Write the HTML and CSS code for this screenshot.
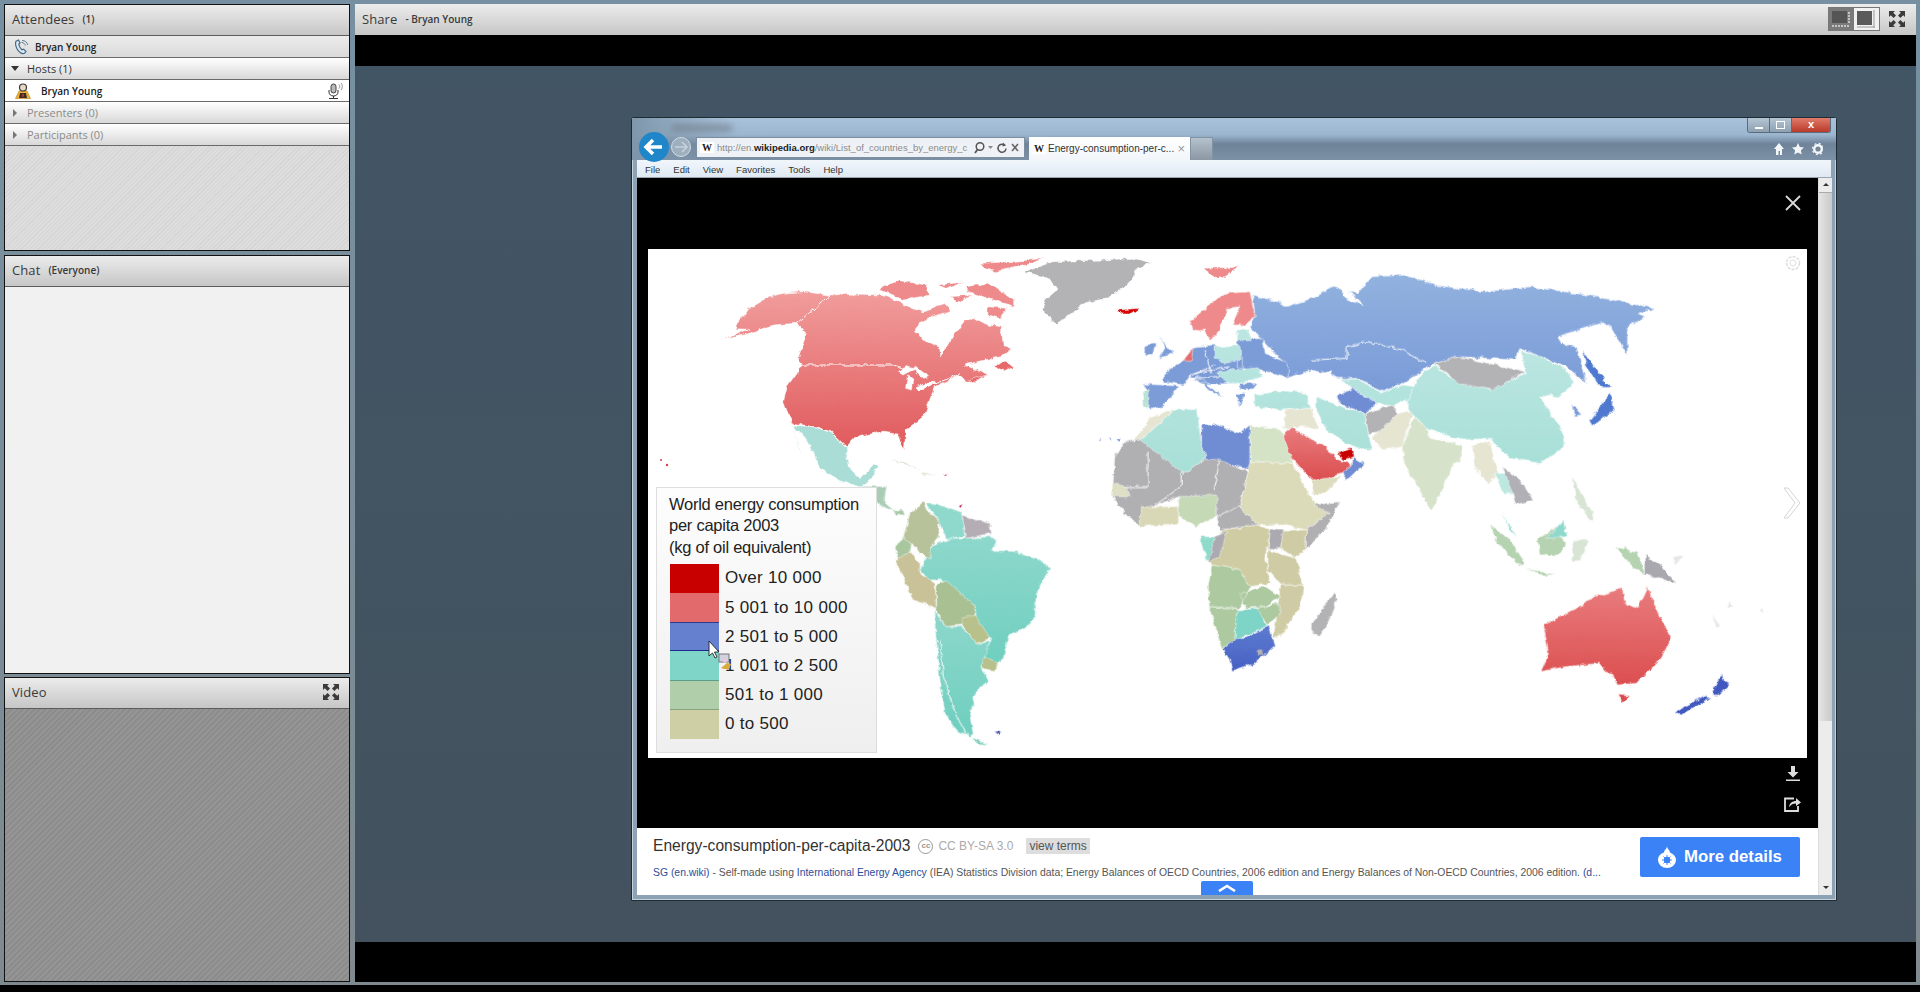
FILE: index.html
```html
<!DOCTYPE html>
<html lang="en">
<head>
<meta charset="utf-8">
<title>Share - Bryan Young</title>
<link rel="stylesheet" href="styles.css">
</head>
<body>
<div class="app">
  <div class="left">
    <section class="panel attendees">
      <header class="phead"><span class="ptitle">Attendees</span><span class="psub">(1)</span></header>
      <div class="row me">
        <svg class="ico-phone" viewBox="0 0 16 16" width="16" height="16"><path d="M3 2.200 5.400 1l1.700 3-1.300 1.200c.3 2 1.300 4 3 5.600l1.800-.6 2.400 2.400-1.600 1.700c-1.300.7-3.400.3-5.300-1.600C3.500 10.100 1.700 5.300 3 2.200z" fill="#dfe8ee" stroke="#3f6a8a" stroke-width="1.200"/><path d="M8.500 3.500c2 0 3.500 1.200 3.800 3M9 1.500c3 0 5.300 1.800 5.800 4.500" fill="none" stroke="#5d7f98" stroke-width="1"/></svg>
        <span class="name">Bryan Young</span>
      </div>
      <div class="row group"><i class="tri down"></i><span>Hosts (1)</span></div>
      <div class="row user">
        <svg class="ico-host" viewBox="0 0 18 18" width="18" height="18"><path d="M1.500 16.500 5 9h8l3.500 7.500z" fill="#eab23c" stroke="#b98212" stroke-width=".6"/><circle cx="9" cy="5.500" r="3.500" fill="#e8d7c4" stroke="#3a3a3a" stroke-width="1.200"/><path d="M6 11h6l1 5H5z" fill="#3b2f25"/><path d="M9 11l1 2-1 3-1-3z" fill="#c73b2a"/></svg>
        <span class="name">Bryan Young</span>
        <svg class="ico-mic" viewBox="0 0 18 18" width="18" height="18"><rect x="5" y="2" width="5" height="9" rx="2.500" fill="#b9b9b9" stroke="#333" stroke-width=".9"/><path d="M3 8v2c0 2.500 2 4 4.500 4S12 12.500 12 10V8M7.500 14v2M3 16.500h9" fill="none" stroke="#333" stroke-width="1"/><path d="M13 2.500c1 1 1 3 0 4M15 1c1.800 2 1.800 5 0 7" fill="none" stroke="#777" stroke-width=".8"/></svg>
      </div>
      <div class="row group off"><i class="tri"></i><span>Presenters (0)</span></div>
      <div class="row group off"><i class="tri"></i><span>Participants (0)</span></div>
      <div class="hatch"></div>
    </section>
    <section class="panel chat">
      <header class="phead"><span class="ptitle">Chat</span><span class="psub">(Everyone)</span></header>
      <div class="chatbody"></div>
    </section>
    <section class="panel video">
      <header class="phead"><span class="ptitle">Video</span>
        <svg class="expand" viewBox="0 0 16 16" width="16" height="16"><path d="M0 0h6L4.200 1.800 7 4.600 4.600 7 1.800 4.200 0 6zM16 0v6l-1.800-1.800L11.400 7 9 4.600l2.800-2.800L10 0zM0 16v-6l1.800 1.800L4.600 9 7 11.400l-2.800 2.800L6 16zM16 16h-6l1.800-1.800L9 11.400 11.400 9l2.800 2.800L16 10z" fill="#3a3a3a"/></svg>
      </header>
      <div class="vidbody"></div>
    </section>
  </div>

  <section class="share">
    <header class="phead sharehead">
      <span class="ptitle">Share</span><span class="psub">- Bryan Young</span>
      <div class="layouts">
        <span class="lbtn dark"><svg viewBox="0 0 24 22" width="24" height="22"><rect x="3" y="3" width="15" height="12" fill="#555"/><path d="M20 4v11M3 18h18" stroke="#ddd" stroke-width="1.500" stroke-dasharray="2 1"/></svg></span>
        <span class="lbtn light"><svg viewBox="0 0 24 22" width="24" height="22"><rect x="3" y="3" width="15" height="14" fill="#5a5a5a"/><path d="M20 2v18M3 19h18" stroke="#999" stroke-width="1"/></svg></span>
      </div>
      <svg class="expand top" viewBox="0 0 16 16" width="16" height="16"><path d="M0 0h6L4.200 1.800 7 4.600 4.600 7 1.800 4.200 0 6zM16 0v6l-1.800-1.800L11.400 7 9 4.600l2.800-2.800L10 0zM0 16v-6l1.800 1.800L4.600 9 7 11.400l-2.800 2.800L6 16zM16 16h-6l1.800-1.800L9 11.400 11.400 9l2.800 2.800L16 10z" fill="#3a3a3a"/></svg>
    </header>
    <div class="band"></div>
    <div class="stage">
      <div class="win">
        <div class="chrome">
          <i class="smudge"></i>
          <div class="wctl"><span class="wb"><i class="wmin"></i></span><span class="wb"><i class="wmax"></i></span><span class="wb close">x</span></div>
          <span class="back"><svg viewBox="0 0 30 30" width="30" height="30"><circle cx="15" cy="15" r="15" fill="#1f86c9"/><path d="M7 15h16M14 8l-7 7 7 7" fill="none" stroke="#fff" stroke-width="3.500"/></svg></span>
          <span class="fwd"><svg viewBox="0 0 20 20" width="20" height="20"><circle cx="10" cy="10" r="9.500" fill="#9eb0bf" stroke="#d3dde5"/><path d="M4 10h12M11 5l5 5-5 5" fill="none" stroke="#c7d2da" stroke-width="1.500"/></svg></span>
          <div class="addr">
            <span class="wfav">W</span>
            <span class="url">http://en.<b>wikipedia.org</b>/wiki/List_of_countries_by_energy_c</span>
            <svg viewBox="0 0 46 14" width="46" height="14"><circle cx="6" cy="5.500" r="3.800" fill="none" stroke="#555" stroke-width="1.500"/><path d="M3.500 8.500 1 12" stroke="#555" stroke-width="1.800"/><path d="M14 5h5l-2.500 3z" fill="#888"/><path d="M31 4.500a4 4 0 1 0 1 3" fill="none" stroke="#555" stroke-width="1.500"/><path d="M29 1.500l3 3-3.500 1z" fill="#555"/><path d="M38 3l6 7M44 3l-6 7" stroke="#666" stroke-width="1.600"/></svg>
          </div>
          <div class="tab"><span class="wfav">W</span><span class="tabtext">Energy-consumption-per-c...</span><span class="tabx">×</span></div>
          <div class="stub"></div>
          <div class="tools">
            <svg viewBox="0 0 50 14" width="50" height="14"><path d="M6 1 1 7h2v6h2.500V9h1.500v4h2V7h2z" fill="#f4f7fa"/><path d="M25 1l1.800 3.900 4.200.5-3.100 2.900.8 4.200-3.700-2.100-3.700 2.100.8-4.200-3.100-2.900 4.200-.5z" fill="#f4f7fa"/><circle cx="45" cy="7" r="3.800" fill="none" stroke="#f4f7fa" stroke-width="2.400"/><circle cx="45" cy="7" r="5.600" fill="none" stroke="#f4f7fa" stroke-width="1.200" stroke-dasharray="2 2.400"/></svg>
          </div>
        </div>
        <nav class="menu"><span>File</span><span>Edit</span><span>View</span><span>Favorites</span><span>Tools</span><span>Help</span></nav>
        <div class="page">
          <div class="main">
            <div class="viewer">
              <svg class="icn-x" viewBox="0 0 16 16" width="16" height="16"><path d="M1 1l14 14M15 1 1 15" stroke="#d8d8d8" stroke-width="1.800"/></svg>
              <svg class="icn-dl" viewBox="0 0 14 16" width="14" height="16"><path d="M5 1h4v6h3.500L7 12.500 1.500 7H5zM0 14.500h14V16H0z" fill="#ddd"/></svg>
              <svg class="icn-sh" viewBox="0 0 18 16" width="18" height="16"><path d="M10 2.500H1v12.500h13v-5" fill="none" stroke="#ddd" stroke-width="1.800"/><path d="M5 11c.5-4 3.500-6 7-6V2l5 4.500L12 10V7.500c-3 0-5 1-7 3.500z" fill="#ddd"/></svg>
              <div class="image">
                <svg class="map" viewBox="648 249 1159 509" width="1159" height="509">
                  <defs>
                    <filter id="rough" filterUnits="userSpaceOnUse" x="648" y="249" width="1159" height="509"><feTurbulence type="fractalNoise" baseFrequency=".14" numOctaves="3" seed="7" result="n"/><feDisplacementMap in="SourceGraphic" in2="n" scale="5" xChannelSelector="R" yChannelSelector="G"/><feGaussianBlur stdDeviation=".35"/></filter>
                    <linearGradient id="gPink" x1="0" y1="0" x2="0" y2="1"><stop offset="0" stop-color="#f19c9c"/><stop offset="1" stop-color="#e05a5c"/></linearGradient>
                    <linearGradient id="gRed" x1="0" y1="0" x2="0" y2="1"><stop offset="0" stop-color="#e97c7e"/><stop offset="1" stop-color="#dc4f50"/></linearGradient>
                    <linearGradient id="gBlue" x1="0" y1="0" x2="0" y2="1"><stop offset="0" stop-color="#92b2df"/><stop offset="1" stop-color="#7a9bd8"/></linearGradient>
                    <linearGradient id="gBlue2" x1="0" y1="0" x2="0" y2="1"><stop offset="0" stop-color="#5f7dd0"/><stop offset="1" stop-color="#4660c4"/></linearGradient>
                    <linearGradient id="gTeal" x1="0" y1="0" x2="0" y2="1"><stop offset="0" stop-color="#bce6e1"/><stop offset="1" stop-color="#a8e0d8"/></linearGradient>
                    <linearGradient id="gTeal2" x1="0" y1="0" x2="0" y2="1"><stop offset="0" stop-color="#8ed8cc"/><stop offset="1" stop-color="#6fcfbf"/></linearGradient>
                  </defs>
                  <g filter="url(#rough)">
                  <g class="z9" transform="translate(720 240) scale(.3827 .3333)">
                    <path fill="url(#gPink)" d="M5 300 40 285 75 268 42 266 55 235 75 205 120 175 165 160 215 155 290 165 355 162 420 165 470 185 500 205 530 215 560 200 590 190 602 212 560 228 525 245 510 270 530 300 570 320 575 348 590 325 610 285 640 240 665 235 700 255 735 260 740 320 762 325 735 350 690 360 640 375 660 385 700 405 650 425 620 405 590 425 560 440 545 490 535 525 510 550 485 570 482 630 465 582 420 575 380 585 350 595 330 620 290 575 250 560 190 550 175 520 165 490 175 440 200 400 215 375 205 355 215 320 225 280 200 250 140 255 100 270 60 285z"/>
                    <path fill="#fff" stroke="none" d="M465 395 490 378 520 385 495 395 478 405zM490 405 505 412 500 450 485 445zM510 378 545 410 530 415 515 400zM515 440 560 420 565 428 520 452z"/>
                    <path fill="none" stroke="#fff" d="M215 375 450 375 500 392M290 165 200 250M560 430 630 400"/>
                    <path fill="#ee8a8c" d="M420 140 470 122 540 135 545 165 480 180 420 150zM640 140 700 130 770 180 770 200 700 175 650 155zM680 70 760 65 850 55 800 75 720 95 690 85zM700 200 750 205 730 235 700 225zM570 135 640 125 590 145zM600 170 660 165 620 190z"/>
                    <path fill="#e8696c" d="M720 380 745 360 768 380 740 392zM650 420 695 405 660 428z"/>
                    <path fill="#b3b3b6" d="M795 95 870 65 1000 60 1080 55 1125 68 1085 90 1070 130 1030 160 1050 150 1010 175 950 190 880 255 845 215 850 180 880 150 860 115z"/>
                    <path fill="#d80000" d="M1040 210 1095 205 1075 222 1050 222z"/>
                    <path fill="#ee8a8c" d="M1262 85 1355 82 1320 110 1295 112z"/>
                    <path fill="#a9ddd6" d="M190 555 250 562 290 578 330 622 335 680 365 715 400 675 412 680 390 725 365 740 320 725 260 685 245 640 225 600 190 555zM190 555 215 650 205 620z"/>
                    <path fill="#a7cdb4" d="M365 740 435 740 430 790 460 820 420 790z"/>
                    <path fill="#dfe3d5" d="M440 660 480 665 530 690 480 672zM525 700 570 705 530 708z"/>
                    <path fill="#c8143c" d="M583 705 600 708 588 712zM624 795 635 788 628 802z"/>
                    <path fill="#7f9ed8" d="M990 600 996 596 994 606zM1015 592 1025 598 1015 600zM1035 600 1048 590 1042 606z"/>
                  </g>
                  <g class="z10" transform="translate(1000 250) scale(.5102 .3333)">
                    <path fill="#ee8a8c" d="M372 215 410 165 440 130 490 125 500 200 480 225 455 225 470 170 445 175 430 240 412 272 400 240 380 245z"/>
                    <path fill="url(#gBlue)" d="M495 135 545 155 560 170 610 145 650 110 700 130 730 80 800 75 850 105 950 125 1040 110 1150 135 1285 175 1250 190 1265 200 1230 230 1230 315 1200 240 1180 215 1140 235 1095 260 1100 280 1130 290 1150 400 1110 350 1060 320 1020 295 1010 330 900 320 850 340 790 400 750 425 700 385 665 385 640 370 610 360 560 385 560 345 515 270 490 230 500 200z"/>
                    <path fill="#fff" stroke="none" d="M615 375 650 365 640 400 665 440 662 480 635 460 625 420zM600 85 650 80 610 120 600 110zM665 110 690 130 710 165 680 150z"/>
                    <path fill="none" stroke="#fff" d="M610 330 680 325 680 290 720 275 790 300 810 320 835 340"/>
                    <path fill="#7c9cd8" d="M320 375 360 330 380 290 420 285 475 320 475 355 470 400 420 402 400 400 370 380 360 405 320 395zM282 402 350 408 320 470 292 478zM310 255 340 310 310 325 325 290zM285 285 305 280 300 315 285 318zM385 375 420 420 440 440 420 430 390 395zM465 270 515 265 520 310 565 340 565 380 520 365 465 350zM470 400 505 400 495 420 470 420zM460 430 480 430 470 470zM1120 460 1140 495 1125 498z"/>
                    <path fill="none" stroke="#fff" d="M380 370 450 350M370 380 420 345M400 300 415 370M375 385 470 375"/>
                    <path fill="#e8696c" d="M360 330 378 295 375 335z"/>
                    <path fill="url(#gTeal)" d="M420 290 470 285 472 330 440 340 420 320zM425 365 505 350 515 380 470 400 445 400zM498 435 560 420 600 430 610 475 540 480 500 470zM620 440 660 465 715 490 720 540 730 600 690 590 640 540 620 480zM668 385 700 388 748 428 790 405 815 410 800 450 770 465 740 460 690 415zM275 570 320 510 345 475 385 480 390 520 395 590 405 625 360 670 280 590zM465 240 490 238 490 272 465 272z"/>
                    <path fill="#b9e2d5" d="M280 420 290 415 290 475 282 470z"/>
                    <path fill="#6f8cd2" d="M660 440 690 415 740 460 715 490 665 460zM395 525 420 520 470 550 490 525 490 660 405 625 395 590zM692 620 715 640 680 690 670 670 690 645z"/>
                    <path fill="#4f79cf" d="M1155 510 1195 430 1205 480 1160 530zM1140 300 1190 400 1200 415 1180 415 1150 350z"/>
                    <path fill="#b3b3b6" d="M715 490 770 465 780 490 745 550 722 550z"/>
                    <path fill="#e6e5d2" d="M730 565 780 490 810 480 800 530 790 590 750 600zM265 570 295 500 345 475 320 510 275 570zM925 590 960 570 975 670 955 700 930 650zM560 480 610 475 625 540 590 530 555 535z"/>
                    <path fill="#d6e2c9" d="M790 590 810 500 835 530 840 560 905 585 905 630 890 640 860 740 845 785 815 700 790 640z"/>
                    <path fill="url(#gTeal)" d="M800 450 820 380 850 345 880 380 960 420 1030 370 1020 300 1060 320 1110 360 1125 400 1095 440 1060 440 1105 550 1105 590 1060 640 1000 625 960 565 905 570 840 540 800 480z"/>
                    <path fill="#fff" stroke="none" d="M1060 440 1080 432 1095 445 1085 470 1065 460z"/>
                    <path fill="#b3b3b6" d="M850 340 900 320 1030 365 965 420 900 400z"/>
                    <path fill="#bce8e0" d="M970 670 1000 670 1015 730 985 730z"/>
                    <path fill="#b0b0b6" d="M985 650 1020 690 1045 750 1010 765 1005 730z"/>
                    <path fill="#8fd8cc" d="M980 780 1015 865 1000 840z"/>
                    <path fill="#b5d3b0" d="M960 825 1000 870 1030 940 1015 945 975 880zM1030 955 1090 975 1060 975zM1052 870 1090 830 1110 880 1095 915 1060 915zM1205 890 1250 905 1265 975 1240 950z"/>
                    <path fill="#8fd8cc" d="M1070 865 1105 810 1110 860z"/>
                    <path fill="#d8e4d4" d="M1125 870 1155 870 1135 935 1120 935zM1120 680 1145 740 1165 800 1160 815 1130 760z"/>
                    <path fill="#e4e8e4" d="M1395 1090 1410 1130 1402 1135zM1490 1075 1500 1085 1490 1090zM1320 920 1340 915 1320 950zM1430 1050 1440 1070 1425 1075z"/>
                    <path fill="#a8a8ae" d="M1265 915 1300 950 1325 1000 1280 980 1265 975z"/>
                    <path fill="url(#gRed)" d="M1065 1125 1130 1075 1165 1040 1220 1015 1225 1060 1250 1075 1270 1010 1290 1090 1315 1160 1295 1230 1245 1300 1210 1305 1200 1270 1185 1265 1175 1240 1110 1250 1060 1265 1075 1210z"/>
                    <path fill="#dc4a4c" d="M1212 1335 1235 1338 1220 1360z"/>
                    <path fill="#3f58c0" d="M1322 1385 1385 1335 1390 1345 1335 1395zM1395 1330 1415 1270 1420 1295 1430 1305 1405 1340z"/>
                    <path fill="url(#gRed)" d="M570 530 635 590 660 625 690 645 670 670 640 690 610 690 570 620 555 560z"/>
                    <path fill="#c80000" d="M660 610 690 595 692 620 675 630z"/>
                    <path fill="#dedcbf" d="M610 690 670 680 640 725 615 740z"/>
                    <path fill="#d4e2c6" d="M490 525 550 540 575 640 490 635z"/>
                    <path fill="#b0b0b3" d="M225 620 245 575 275 570 360 670 405 625 430 630 485 665 470 770 425 800 425 770 350 740 300 770 275 830 250 800 220 740z"/>
                    <path fill="none" stroke="#fff" d="M290 605V710H245M355 670V710L300 770M430 630 420 720"/>
                    <path fill="#c6d9b7" d="M350 740 425 735 425 800 385 830 350 800z"/>
                    <path fill="#d9d8b6" d="M275 770 350 770 350 820 275 830z"/>
                    <path fill="#dedfc4" d="M220 700 250 710 255 740 220 740z"/>
                    <path fill="#b0b0b3" d="M425 800 470 770 505 825 430 840z"/>
                    <path fill="#dbdab9" d="M490 635 575 640 610 745 645 790 600 840 555 825 505 825 470 770 485 665z"/>
                    <path fill="#b0b0b3" d="M615 765 665 755 640 835 600 895 600 840 645 790z"/>
                    <path fill="#cfcca3" d="M435 840 505 825 530 840 520 920 530 1000 490 1010 470 960 415 945 410 930z"/>
                    <path fill="#8edacb" d="M390 860 425 860 420 920 405 930z"/>
                    <path fill="#aaaab0" d="M420 860 445 845 430 920 410 935zM530 840 558 840 550 895 525 900z"/>
                    <path fill="#cfcca5" d="M555 840 600 840 600 895 580 925 550 895zM525 900 580 925 595 1005 550 1005 525 960zM550 1005 595 1005 590 1065 555 1150 535 1165 540 1120z"/>
                    <path fill="#acc99f" d="M415 945 470 960 490 1010 470 1075 410 1070 408 1010zM470 1030 520 1010 550 1040 520 1070 480 1075zM410 1070 465 1075 460 1170 435 1198zM500 1075 545 1060 550 1090 525 1125z"/>
                    <path fill="#7ed4c6" d="M465 1080 505 1075 522 1128 480 1160 460 1170z"/>
                    <path fill="url(#gBlue2)" d="M437 1198 462 1165 480 1165 525 1128 540 1185 500 1240 455 1262 450 1230z"/>
                    <ellipse cx="510" cy="1208" rx="7" ry="10" fill="#b0b0b6"/>
                    <path fill="#b3b3b6" d="M612 1120 655 1025 660 1050 640 1130 625 1162 612 1150z"/>
                  </g>
                  <g class="z11" transform="translate(860 480) scale(.3333)">
                    <path fill="url(#gTeal2)" d="M180 270 220 195 260 180 320 175 385 170 410 180 395 210 470 215 540 240 570 265 530 340 525 410 495 445 445 470 430 535 400 560 370 525 395 480 350 430 345 380 300 340 250 300 205 300z"/>
                    <path fill="#8ed8cc" d="M195 70 240 75 305 100 315 170 260 180 240 125z"/>
                    <path fill="#b4aeb4" d="M305 105 390 130 395 160 320 175z"/>
                    <path fill="#b7c29a" d="M130 170 150 100 190 65 200 90 240 125 235 175 215 195 210 240 175 215 155 190z"/>
                    <path fill="#a8c79f" d="M105 205 130 170 155 190 150 215 115 240z"/>
                    <path fill="#c9c197" d="M105 240 150 215 180 245 180 280 225 310 230 385 160 360z"/>
                    <path fill="#a9c092" d="M230 310 260 300 345 380 345 405 305 435 255 440 230 385z"/>
                    <path fill="#b8c08c" d="M305 415 345 405 390 475 350 490 305 435zM370 530 415 550 400 575 365 560z"/>
                    <path fill="url(#gTeal2)" d="M225 385 255 440 305 440 350 490 390 485 365 560 385 600 345 640 330 710 340 760 330 770 290 750 255 700 240 600 225 440z"/>
                    <path fill="none" stroke="#c6f0e8" d="M240 480 250 590 285 700 325 768"/>
                    <path fill="#7ecdb9" d="M335 770 385 795 350 790z"/>
                    <path fill="#a9cdb4" d="M0 20 80 20 70 60 100 95 60 75 0 30z"/>
                    <path fill="#a7c8a8" d="M95 90 130 90 135 110 110 100z"/>
                    <path fill="#3a3fa8" d="M400 755 425 752 415 765z"/>
                  </g>
                  </g>
                  <circle cx="661" cy="460" r="1" fill="#d94050"/><circle cx="667" cy="465" r="1.200" fill="#d94050"/>
                </svg>
                <svg class="gear" viewBox="0 0 18 18" width="18" height="18"><circle cx="9" cy="9" r="6.500" fill="none" stroke="#ddd" stroke-width="1.600" stroke-dasharray="3 1.200"/><circle cx="9" cy="9" r="3" fill="none" stroke="#e0e0e0"/></svg>
                <svg class="next" viewBox="0 0 20 32" width="20" height="32"><path d="M2 1 6 1 18 16 6 31 2 31 13 16z" fill="#fff" stroke="#d4d4d4"/></svg>
                <div class="legend">
                  <p class="ltitle">World energy consumption<br>per capita 2003<br>(kg of oil equivalent)</p>
                  <ul class="keys">
                    <li class="k1"><i></i><span>Over 10 000</span></li>
                    <li class="k2"><i></i><span>5 001 to 10 000</span></li>
                    <li class="k3"><i></i><span>2 501 to 5 000</span></li>
                    <li class="k4"><i></i><span>1 001 to 2 500</span></li>
                    <li class="k5"><i></i><span>501 to 1 000</span></li>
                    <li class="k6"><i></i><span>0 to 500</span></li>
                  </ul>
                </div>
                <svg class="cursor" viewBox="0 0 24 30" width="24" height="30"><path d="M1 0v15l3.500-3 2.500 5 2-1-2.500-5H11z" fill="#fff" stroke="#222" stroke-width=".9"/><rect x="11" y="13" width="10" height="8" fill="#cfd3df" stroke="#777"/><circle cx="17" cy="19" r="2.500" fill="#e5c9dc"/><path d="M13 27l6-5 4 1-2 5h-5z" fill="#d9ab3f"/></svg>
              </div>
            </div>
            <div class="details">
              <div class="dtop">
                <span class="dtitle">Energy-consumption-per-capita-2003</span>
                <span class="cc">cc</span>
                <span class="lic">CC BY-SA 3.0</span>
                <span class="terms">view terms</span>
              </div>
              <p class="desc"><a>SG (en.wiki)</a> - Self-made using <a>International Energy Agency</a> (IEA) Statistics Division data; Energy Balances of OECD Countries, 2006 edition and Energy Balances of Non-OECD Countries, 2006 edition. <a>(d...</a></p>
              <a class="more"><svg viewBox="0 0 18 22" width="18" height="22"><path d="M9 0c0 3 3 4 3 6.500 4 1.500 6 4.500 6 7.500a9 8 0 0 1-18 0c0-3.500 2.500-6.500 6-7.500C6 4 9 3 9 0z" fill="#fff"/><circle cx="9" cy="14" r="3.200" fill="#3b82f6"/><path d="M9 9v10M4 14h10M5.500 10.500l7 7M12.500 10.500l-7 7" stroke="#3b82f6" stroke-width=".9"/></svg><span>More details</span></a>
              <span class="upbtn"><svg viewBox="0 0 20 8" width="20" height="8"><path d="M2 7 10 2l8 5" fill="none" stroke="#fff" stroke-width="2.600"/></svg></span>
            </div>
          </div>
          <div class="vbar"><i class="arr up"></i><i class="thumb"></i><i class="arr dn"></i></div>
        </div>
      </div>
    </div>
    <div class="band low"></div>
  </section>
</div>
<div class="foot"></div>
</body>
</html>
```

FILE: styles.css
```css
*{box-sizing:border-box}
html,body{margin:0;height:992px;overflow:hidden}
body{background:#000;font-family:"Open Sans","Liberation Sans",sans-serif;color:#333}
.app{height:985px;display:flex;gap:5px;padding:4px 4px 3px 4px;background:linear-gradient(#7690a2,#7f8a90)}
.foot{height:7px;background:#000}
.left{width:346px;display:flex;flex-direction:column}
.panel{border:1px solid #111;display:flex;flex-direction:column;background:#eee}
.attendees{height:247px;margin-bottom:4px}
.chat{height:420px;margin-bottom:3px}
.video{height:305px}
.phead{height:31px;flex:none;display:flex;align-items:center;padding:0 0 2px 7px;gap:8px;background:linear-gradient(#ececec,#c6c6c6);border-bottom:1px solid #5c5c5c}
.ptitle{font-size:13px;color:#3a3a3a;letter-spacing:.1px}
.psub{font-size:10px;font-weight:600;color:#3a3a3a}
.row{display:flex;align-items:center;border-bottom:1px solid #6a6a6a;font-size:10px;height:22px}
.row.me{background:linear-gradient(#ececec,#dadada);padding-left:8px;gap:6px;font-weight:600;color:#222}
.row.user{background:#fff;padding-left:9px;gap:9px;font-weight:600;color:#222}
.row.user .ico-mic{margin-left:auto;margin-right:5px}
.group{background:linear-gradient(#fff,#d8d8d8);padding-left:6px;gap:8px;color:#333;font-size:11px}
.group.off{color:#8a8a8a}
.tri{width:0;height:0;border-left:4px solid #777;border-top:4px solid transparent;border-bottom:4px solid transparent;margin:0 2px}
.tri.down{border-top:5px solid #333;border-bottom:0;border-left:4px solid transparent;border-right:4px solid transparent;margin:0}
.hatch{flex:1;background:repeating-linear-gradient(135deg,#d5d5d5 0 1px,#dddddd 1px 3px)}
.chatbody{flex:1;background:#f1f1f1}
.vidbody{flex:1;background:repeating-linear-gradient(135deg,#8c8c8c 0 2px,#959595 2px 4px)}
.expand{margin-left:auto;margin-right:10px}
.share{flex:1;display:flex;flex-direction:column;min-width:0}
.sharehead{gap:8px;border-bottom:0}
.layouts{margin-left:auto;display:flex;border:1px solid #777;margin-right:1px}
.lbtn{width:25px;height:22px;display:block}
.lbtn.dark{background:#7a7a7a}
.lbtn.light{background:#f1f1f1}
.expand.top{margin:0 11px 0 0}
.band{height:31px;flex:none;background:#000}
.band.low{height:40px}
.stage{flex:1;background:linear-gradient(#425565,#43525e);padding:51px 0 0 276px;overflow:hidden}
.win{width:1206px;height:784px;background:#8da3b5;border:1px solid #1f2c36;border-radius:3px 3px 0 0;padding:0 4px 5px 5px;display:flex;flex-direction:column;box-shadow:inset 0 0 0 1px #c4d2dc}
.chrome{height:42px;flex:none;margin:0 -4px 0 -5px;padding:19px 0 0 7px;display:flex;align-items:flex-start;position:relative;background:linear-gradient(90deg,#7f97ab,rgba(127,151,171,0) 8%),linear-gradient(#a9c2da 0,#9cb6d0 40%,#6e8298 62%,#7c90a6 100%)}
.smudge{position:absolute;left:40px;top:6px;width:60px;height:8px;background:rgba(110,120,130,.55);filter:blur(3px)}
.wctl{position:absolute;right:5px;top:0;height:15px;display:flex;border:1px solid #5b6d7d;border-top:0;border-radius:0 0 3px 3px;overflow:hidden}
.wb{width:22px;display:flex;align-items:center;justify-content:center;background:linear-gradient(#b4c5d4,#8ea1b1);border-right:1px solid #5b6d7d}
.wb.close{width:38px;background:linear-gradient(#e07b6a,#b93a2a);color:#fff;font:bold 11px "Liberation Sans",sans-serif;border:0;padding-bottom:3px}
.wmin{width:8px;height:2px;background:#fff;margin-top:6px}
.wmax{width:9px;height:8px;border:1px solid #fff}
.back{width:30px;height:30px;margin-top:-5px;flex:none;display:block}
.fwd{width:20px;height:20px;margin:0 0 0 2px;flex:none;display:block}
.addr{width:329px;height:21px;margin-left:5px;flex:none;background:#eef2f6;border:1px solid #7c8fa0;display:flex;align-items:center;padding:0 4px 0 3px;gap:3px;overflow:hidden;font:9.500px "Liberation Sans",sans-serif;color:#8b8b8b}
.wfav{font:bold 10px "Liberation Serif",serif;color:#222;background:#fff;width:14px;flex:none;text-align:center}
.url{flex:1;white-space:nowrap;overflow:hidden}
.url b{color:#222}
.tab{width:161px;height:23px;margin-left:4px;flex:none;background:linear-gradient(#fff,#f2f6fa);display:flex;align-items:center;padding:0 5px 0 3px;gap:2px;font:10px "Liberation Sans",sans-serif;color:#333;white-space:nowrap}
.tabtext{flex:1;overflow:hidden}
.tabx{color:#999;font-size:13px}
.stub{width:23px;height:23px;flex:none;background:linear-gradient(#b5c2ce,#8b98a4);border:1px solid #8094a5;border-bottom:0}
.tools{margin-left:auto;margin-right:13px;margin-top:2px}
.menu{height:18px;flex:none;margin-right:1px;background:linear-gradient(#f1f6fb,#dfe9f3);border-bottom:1px solid #99a5ae;display:flex;align-items:center;padding:1px 0 0 8px;gap:13px;font:9.500px "Liberation Sans",sans-serif;color:#333}
.page{flex:1;display:flex;min-height:0}
.main{width:1181px;display:flex;flex-direction:column;position:relative}
.viewer{height:650px;flex:none;background:#000;padding:71px 0 0 11px;position:relative}
.icn-x{position:absolute;left:1148px;top:17px}
.icn-dl{position:absolute;left:1149px;top:587px}
.icn-sh{position:absolute;left:1147px;top:618px}
.image{width:1159px;height:509px;background:#fff;position:relative}
.map{display:block}
.map path{vector-effect:non-scaling-stroke;stroke-linejoin:round}
.map .z9 path,.map .z10 path,.map .z11 path{stroke:#fff;stroke-width:.5}
.map path[fill="none"]{stroke-width:1}
.gear{position:absolute;right:5px;top:5px}
.next{position:absolute;right:5px;top:238px}
.legend{position:absolute;left:8px;top:238px;width:221px;height:266px;background:linear-gradient(#fdfdfd,#efefef);border:1px solid #dedede;padding:6px 0 0 12px;font-family:"Liberation Sans",sans-serif;color:#222}
.ltitle{margin:0 0 6px;font-size:16.500px;line-height:21.300px;letter-spacing:-.25px}
.keys{list-style:none;margin:0;padding:0}
.keys li{display:flex;align-items:center;height:29.200px;gap:6px;font-size:17px;letter-spacing:.3px}
.keys i{width:49px;height:100%;display:block;margin-left:1px}
.k1 i{background:#c80000}
.k2 i{background:#e26a6c}
.k3 i{background:#6480cf;border-top:1px solid #2b3a8c;border-bottom:1px solid #1f2a90}
.k4 i{background:#7fd5c7;border-bottom:1px solid #5e9e8a}
.k5 i{background:#afcea9;border-bottom:1px solid #8aa37f}
.k6 i{background:#cfcfa5}
.cursor{position:absolute;left:60px;top:392px}
.details{flex:1;background:#fff;position:relative;padding:8px 0 0 16px;font-family:"Liberation Sans",sans-serif}
.dtop{display:flex;align-items:center;height:20px;white-space:nowrap}
.dtitle{font-size:15.600px;color:#333}
.cc{margin-left:8px;width:15px;height:15px;border:1.500px solid #999;border-radius:50%;font:bold 8px/12px "Liberation Sans",sans-serif;color:#999;text-align:center}
.lic{margin-left:5px;font-size:12px;color:#aaa}
.terms{margin-left:13px;background:#ddd;color:#555;font-size:12px;padding:1px 3px;height:16px;line-height:14px}
.desc{margin:11px 0 0;font-size:10.400px;color:#555;white-space:nowrap;overflow:hidden;width:960px}
.desc a{color:#2a4d9a}
.more{position:absolute;left:1003px;top:9px;width:160px;height:40px;background:#3b82f6;border-radius:2px;display:flex;align-items:center;justify-content:center;gap:8px;color:#fff;font-weight:bold;font-size:16.800px}
.upbtn{position:absolute;left:564px;bottom:0;width:52px;height:14px;background:#3b82f6;border-radius:2px 2px 0 0;display:flex;align-items:center;justify-content:center}
.vbar{width:14px;background:#ececec;display:flex;flex-direction:column;border-left:1px solid #ddd}
.arr{height:14px;flex:none;display:block;position:relative}
.arr::after{content:"";position:absolute;left:4px;top:5px;border-left:3px solid transparent;border-right:3px solid transparent}
.arr.up::after{border-bottom:3px solid #333}
.arr.dn::after{border-top:3px solid #333}
.thumb{flex:1;display:block;background:linear-gradient(90deg,#e4e4e4,#c9c9c9);border-top:1px solid #aaa;margin-bottom:160px}
```
